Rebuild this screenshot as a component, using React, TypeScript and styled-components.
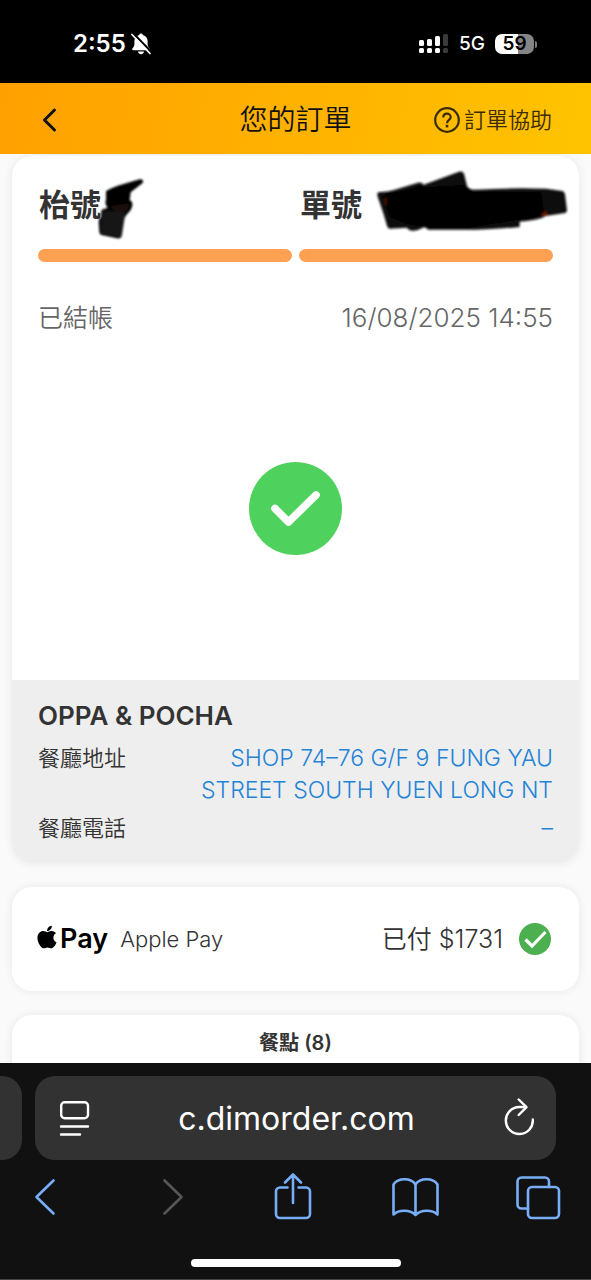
import React from "react";
import styled, { createGlobalStyle } from "styled-components";
import { FaApple } from "react-icons/fa";

const GlobalStyle = createGlobalStyle`
  *, *::before, *::after { box-sizing: border-box; }
  body {
    margin: 0;
    background: #fafafa;
    color: #333;
    font-family: Inter, "Noto Sans CJK TC", sans-serif;
    font-size: 22px;
    font-weight: 350;
    line-height: 32px;
  }
  button { font: inherit; color: inherit; border: 0; padding: 0; background: none; cursor: pointer; }
  svg { display: block; flex: none; }
  h1, h2, p, dl, dd, dt { margin: 0; font-weight: inherit; font-size: inherit; }
`;

const Shell = styled.div`
  display: flex;
  flex-direction: column;
  height: 100vh;
`;

/* ---------- system status bar ---------- */

const StatusBar = styled.div`
  display: flex;
  align-items: center;
  justify-content: space-between;
  flex: none;
  padding: 26px 54px 21px 73px;
  background: #000;
  color: #fff;
`;

const StatusGroup = styled.div<{ $gap: number }>`
  display: flex;
  align-items: center;
  gap: ${(p) => p.$gap}px;
  height: 36px;
`;

const Clock = styled.span`
  font-size: 24px;
  font-weight: 600;
`;

const Network = styled.span`
  font-size: 19px;
  font-weight: 500;
`;

const Battery = styled.span`
  display: flex;
  align-items: center;
  gap: 1px;
  &::after {
    content: "";
    width: 2px;
    height: 7px;
    border-radius: 0 2px 2px 0;
    background: #7d7d7d;
  }
`;

const BatteryLevel = styled.span`
  width: 39px;
  height: 20px;
  border-radius: 7px;
  background: linear-gradient(90deg, #fff 59%, #858585 59%);
  color: #000;
  font-size: 19px;
  font-weight: 600;
  line-height: 20px;
  text-align: center;
`;

/* ---------- app header ---------- */

const Header = styled.header`
  display: grid;
  grid-template-columns: 1fr auto 1fr;
  align-items: center;
  flex: none;
  height: 71px;
  padding: 2px 39px 0;
  background: linear-gradient(100deg, #ffa000, #ffc400);
`;

const BackButton = styled.button`
  justify-self: start;
  color: #111;
`;

const HeaderTitle = styled.h1`
  color: #111;
  font-size: 28px;
`;

const HelpButton = styled.button`
  display: flex;
  align-items: center;
  justify-self: end;
  gap: 4px;
  color: #3b2c08;
`;

/* ---------- page content ---------- */

const Content = styled.main`
  display: flex;
  flex-direction: column;
  flex: 1;
  gap: 24px;
  min-height: 0;
  padding: 2px 12px 24px;
  overflow-y: auto;
  scrollbar-width: none;
`;

const Card = styled.section`
  flex: none;
  border-radius: 20px;
  background: #fff;
  box-shadow: 0 0 10px rgba(0, 0, 0, 0.08);
`;

const OrderBody = styled.div`
  padding: 26px 26px 0;
`;

const Steps = styled.div`
  display: grid;
  grid-template-columns: 1fr 1fr;
  gap: 7px;
`;

const Step = styled.div`
  position: relative;
  &::after {
    content: "";
    display: block;
    height: 13px;
    margin-top: 21px;
    border-radius: 7px;
    background: #ffa052;
  }
`;

const StepLabel = styled.h2`
  padding-left: 1px;
  font-size: 31px;
  font-weight: 700;
  line-height: 46px;
`;

const Scribble = styled.svg<{ $left: number; $top: number }>`
  position: absolute;
  left: ${(p) => p.$left}px;
  top: ${(p) => p.$top}px;
`;

const OrderStatus = styled.div`
  display: flex;
  justify-content: space-between;
  margin-top: 38px;
  color: #666;
  font-size: 26px;
  line-height: 36px;
`;

const StatusText = styled.span`
  font-size: 25px;
`;

const Result = styled.div`
  display: flex;
  align-items: center;
  justify-content: center;
  padding: 126px 0 125px;
`;

const Shop = styled.div`
  padding: 18px 26px 19px;
  border-radius: 0 0 20px 20px;
  background: #eee;
`;

const ShopName = styled.h2`
  margin-bottom: 8px;
  font-size: 26px;
  font-weight: 600;
  line-height: 36px;
`;

const ShopDetails = styled.dl`
  display: grid;
  gap: 6px;
`;

const ShopRow = styled.div`
  display: flex;
  justify-content: space-between;
  dd { max-width: 360px; text-align: right; }
`;

const ShopLink = styled.a`
  color: #1f83d6;
  font-size: 23px;
  text-decoration: none;
`;

const Payment = styled(Card)`
  display: flex;
  align-items: center;
  justify-content: space-between;
  padding: 36px 28px 36px 25px;
`;

const PaymentGroup = styled.div<{ $gap: number }>`
  display: flex;
  align-items: center;
  gap: ${(p) => p.$gap}px;
`;

const PayMark = styled.span`
  display: flex;
  align-items: center;
  gap: 3px;
  color: #000;
  font-size: 27px;
  font-weight: 600;
`;

const AppleLogo = styled(FaApple)`
  width: 20px;
  height: 26px;
  margin-bottom: 4px;
`;

const Amount = styled.span`
  font-size: 25px;
`;

const Items = styled(Card)`
  padding: 12px 26px 64px;
`;

const ItemsTitle = styled.h2`
  font-size: 20px;
  font-weight: 600;
  text-align: center;
`;

/* ---------- browser bar ---------- */

const BrowserBar = styled.footer`
  flex: none;
  padding: 13px 0 12px;
  border-bottom: 1px solid #444;
  background: #111;
  color: #fff;
`;

const AddressRow = styled.div`
  display: flex;
  gap: 13px;
  height: 84px;
  padding-right: 35px;
`;

const PreviousTab = styled.div`
  flex: none;
  width: 22px;
  border-radius: 0 20px 20px 0;
  background: #323232;
`;

const AddressBar = styled.div`
  display: flex;
  align-items: center;
  justify-content: space-between;
  flex: 1;
  padding: 0 20px 0 24px;
  border-radius: 20px;
  background: #323232;
`;

const Address = styled.button`
  padding-top: 2px;
  font-size: 32px;
  font-weight: 400;
`;

const Toolbar = styled.nav`
  display: flex;
  justify-content: space-between;
  padding: 9px 29px 34px 21px;
`;

const ToolButton = styled.button`
  color: #78aef8;
  &:disabled { color: #565656; }
`;

const HomeIndicator = styled.div`
  width: 210px;
  height: 8px;
  margin: 0 auto;
  border-radius: 4px;
  background: #fff;
`;

const toolIcon = {
  width: 48,
  height: 56,
  viewBox: "0 0 48 56",
  fill: "none",
  stroke: "currentColor",
  strokeWidth: 2.6,
  strokeLinecap: "round" as const,
  strokeLinejoin: "round" as const,
};

const SilentBell = () => (
  <svg width="20" height="22" viewBox="0 0 20 22" aria-label="Silent">
    <path d="M10 0.500c1 0 1.700.6 1.900 1.500 3 .8 4.700 3.200 4.700 6.300v2.900c0 1.900.8 2.900 1.900 4.100.7.800.3 1.900-.7 1.900H2.200c-1 0-1.400-1.100-.7-1.900C2.600 14.100 3.400 13.100 3.400 11.200V8.300c0-3.100 1.700-5.500 4.700-6.300C8.300 1.100 9 0.500 10 0.500z" fill="#fff" />
    <path d="M7 18.400h6c-.3 1.800-1.500 2.800-3 2.800s-2.700-1-3-2.800z" fill="#fff" />
    <path d="M2 0L21 19.500" stroke="#000" strokeWidth="2" />
    <path d="M0.900 1.500L19 20.500" stroke="#fff" strokeWidth="1.700" strokeLinecap="round" />
  </svg>
);

const Signal = () => (
  <svg width="30" height="20" viewBox="0 0 30 20" aria-label="Signal">
    <g fill="#fff">
      <rect x="0" y="6" width="5" height="6" rx="1.500" />
      <rect x="8" y="5" width="5" height="7" rx="1.500" />
      <rect x="16" y="2" width="5" height="10" rx="1.500" />
      <rect x="0" y="14" width="5" height="5" rx="1.500" />
      <rect x="8" y="14" width="5" height="5" rx="1.500" />
      <rect x="16" y="14" width="5" height="5" rx="1.500" />
    </g>
    <g fill="#3a3a3a">
      <rect x="24" y="0" width="5" height="12" rx="1.500" />
      <rect x="24" y="14" width="5" height="5" rx="1.500" />
    </g>
  </svg>
);

export default function App() {
  return (
    <Shell>
      <GlobalStyle />
      <StatusBar>
        <StatusGroup $gap={5}>
          <Clock>2:55</Clock>
          <SilentBell />
        </StatusGroup>
        <StatusGroup $gap={10}>
          <Signal />
          <Network>5G</Network>
          <Battery>
            <BatteryLevel>59</BatteryLevel>
          </Battery>
        </StatusGroup>
      </StatusBar>

      <Header>
        <BackButton aria-label="返回">
          <svg width="20" height="28" viewBox="0 0 20 28" fill="none" stroke="currentColor" strokeWidth="3" strokeLinecap="round" strokeLinejoin="round">
            <path d="M15.500 4L5.500 14l10 10" />
          </svg>
        </BackButton>
        <HeaderTitle>您的訂單</HeaderTitle>
        <HelpButton>
          <svg width="26" height="26" viewBox="0 0 26 26" fill="none" stroke="currentColor" strokeWidth="2.200">
            <circle cx="13" cy="13" r="11.800" />
            <path d="M9.300 10.400c0-2.200 1.600-3.700 3.700-3.700s3.700 1.500 3.700 3.500c0 2.600-3.700 2.900-3.700 6" />
            <path d="M13 17.800v2.600" strokeWidth="2.600" />
          </svg>
          訂單協助
        </HelpButton>
      </Header>

      <Content>
        <Card>
          <OrderBody>
            <Steps>
              <Step>
                <StepLabel>枱號</StepLabel>
                <Scribble $left={59} $top={-5} width="50" height="64" viewBox="290 80 150 192" aria-hidden="true">
                  <defs>
                    <filter id="soft" x="-10%" y="-10%" width="120%" height="120%">
                      <feGaussianBlur stdDeviation="2.500" />
                    </filter>
                  </defs>
                  <g filter="url(#soft)">
                    <path d="M317 122Q334 112 352 106L418 87Q432 86 427 98L391 126L388 150Q398 154 396 166Q393 180 384 187Q374 196 372 206L364 258Q362 266 350 264L304 254Q297 252 297 246L295 214Q296 204 303 198L304 178L322 172Q312 160 317 148Z" fill="#060606" />
                    <path d="M302 182H374L362 260L302 248Z" fill="#141414" />
                    <path d="M330 168L386 160L382 178L366 186L340 178Z" fill="#1f0d08" />
                  </g>
                </Scribble>
              </Step>
              <Step>
                <StepLabel>單號</StepLabel>
                <Scribble $left={74} $top={-15} width="200" height="67" viewBox="250 50 600 201" aria-hidden="true">
                  <g filter="url(#soft)">
                    <path d="M268 125Q290 126 310 120L385 97Q396 95 402 103L508 64Q520 62 523 70L532 106Q536 116 552 118Q660 112 770 115L818 122Q825 124 826 132L832 180Q832 188 822 189L768 197Q750 210 690 214V230Q630 236 560 238H416L404 230Q384 242 368 241Q356 240 352 232L300 235Q294 234 292 226L282 192L263 136Q262 125 268 125Z" fill="#111" />
                    <path d="M292 128Q340 126 390 106L410 110L520 104L550 126H755L764 188Q740 206 690 208L540 232H420L350 222L300 200L276 140Z" fill="#000" />
                    <path d="M280 146L290 140L293 162L286 166Z" fill="#3a0f06" />
                    <path d="M754 192L768 182L776 194L762 197Z" fill="#661405" />
                  </g>
                </Scribble>
              </Step>
            </Steps>
            <OrderStatus>
              <StatusText>已結帳</StatusText>
              <time dateTime="2025-08-16T14:55">16/08/2025 14:55</time>
            </OrderStatus>
            <Result>
              <svg width="93" height="93" viewBox="0 0 93 93" role="img" aria-label="完成">
                <circle cx="46.500" cy="46.500" r="46.500" fill="#4fd15d" />
                <path d="M26 46.500L39.500 60L67 33" fill="none" stroke="#fff" strokeWidth="7.600" strokeLinecap="round" strokeLinejoin="round" />
              </svg>
            </Result>
          </OrderBody>
          <Shop>
            <ShopName>OPPA &amp; POCHA</ShopName>
            <ShopDetails>
              <ShopRow>
                <dt>餐廳地址</dt>
                <dd>
                  <ShopLink href="#map">SHOP 74–76 G/F 9 FUNG YAU STREET SOUTH YUEN LONG NT</ShopLink>
                </dd>
              </ShopRow>
              <ShopRow>
                <dt>餐廳電話</dt>
                <dd>
                  <ShopLink href="#phone">–</ShopLink>
                </dd>
              </ShopRow>
            </ShopDetails>
          </Shop>
        </Card>

        <Payment>
          <PaymentGroup $gap={12}>
            <PayMark>
              <AppleLogo aria-label="Apple" />
              Pay
            </PayMark>
            <span>Apple Pay</span>
          </PaymentGroup>
          <PaymentGroup $gap={16}>
            <Amount>已付 $1731</Amount>
            <svg width="32" height="32" viewBox="0 0 32 32" role="img" aria-label="已付">
              <circle cx="16" cy="16" r="16" fill="#4caf50" />
              <path d="M6.500 16.500L13 23L26.500 9" fill="none" stroke="#fff" strokeWidth="3.200" />
            </svg>
          </PaymentGroup>
        </Payment>

        <Items>
          <ItemsTitle>餐點 (8)</ItemsTitle>
        </Items>
      </Content>

      <BrowserBar>
        <AddressRow>
          <PreviousTab />
          <AddressBar>
            <button aria-label="Page settings">
              <svg width="32" height="40" viewBox="0 0 32 40" fill="none" stroke="currentColor" strokeWidth="2.400" strokeLinecap="round">
                <rect x="2.200" y="4.200" width="26.800" height="16" rx="3.500" />
                <path d="M2 28.500h27M2 36.500h19" />
              </svg>
            </button>
            <Address>c.dimorder.com</Address>
            <button aria-label="Reload">
              <svg width="34" height="40" viewBox="0 0 34 40" fill="none" stroke="currentColor" strokeWidth="2.400" strokeLinecap="round" strokeLinejoin="round">
                <path d="M30.800 21.500A13.500 13.500 0 1 1 17.300 9h6.500" />
                <path d="M16.700 1.500L24.500 9.200L16.700 17" />
              </svg>
            </button>
          </AddressBar>
        </AddressRow>
        <Toolbar>
          <ToolButton aria-label="Back">
            <svg {...toolIcon}>
              <path d="M32.500 11.500L15.500 28l17 16.500" />
            </svg>
          </ToolButton>
          <ToolButton aria-label="Forward" disabled>
            <svg {...toolIcon}>
              <path d="M20.500 11.500L37.500 28l-17 16.500" />
            </svg>
          </ToolButton>
          <ToolButton aria-label="Share">
            <svg {...toolIcon}>
              <path d="M19.500 18.500h-7.500a4 4 0 0 0-4 4v22.500a4 4 0 0 0 4 4h26a4 4 0 0 0 4-4V22.500a4 4 0 0 0-4-4H30.500" />
              <path d="M25 34V6M17 13.500l8-8l8 8" />
            </svg>
          </ToolButton>
          <ToolButton aria-label="Bookmarks">
            <svg {...toolIcon}>
              <path d="M24.500 15.500C20 8.500 7 8.500 2.500 15.500V45.500C8 40.500 19 40.500 24.500 46C30 40.500 41 40.500 46.500 45.500V15.500C42 8.500 29 8.500 24.500 15.500V46" />
            </svg>
          </ToolButton>
          <ToolButton aria-label="Tabs">
            <svg {...toolIcon}>
              <rect x="14" y="18" width="31" height="31" rx="4" />
              <path d="M14 39.500H7.500a4 4 0 0 1-4-4V12.500a4 4 0 0 1 4-4h23.500a4 4 0 0 1 4 4V18" />
            </svg>
          </ToolButton>
        </Toolbar>
        <HomeIndicator />
      </BrowserBar>
    </Shell>
  );
}
